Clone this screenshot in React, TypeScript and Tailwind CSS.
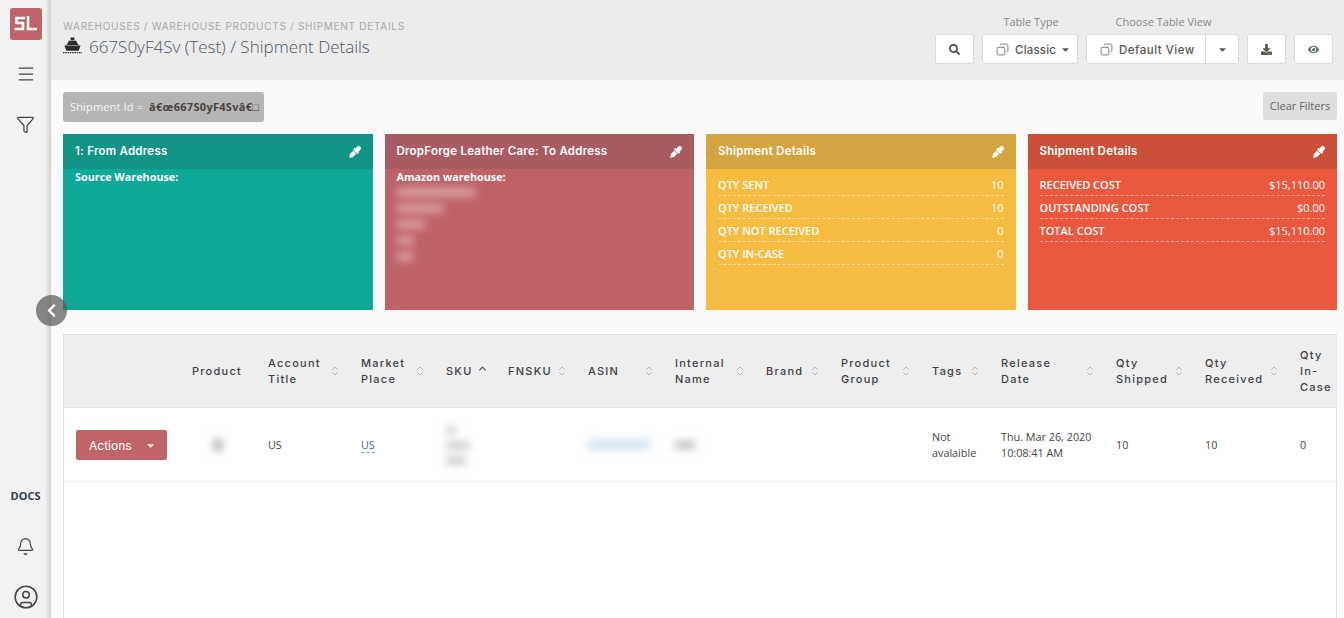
import React from "react";
import { Menu, Filter, Bell, CircleUser, Copy, ChevronsUpDown, ChevronUp } from "lucide-react";
import { FaEyeDropper, FaSearch, FaDownload, FaEye, FaChevronLeft, FaCaretDown } from "react-icons/fa";

const mont = "font-['Inter','Open_Sans',sans-serif]";
const open = "font-['Open_Sans','Noto_Sans',sans-serif]";

function Caret({ className = "" }: { className?: string }) {
  return <FaCaretDown className={`text-[11px] ${className}`} />;
}

function Ship() {
  return (
    <svg width="19" height="18" viewBox="0 0 20 18" className="mr-[7px] -mt-[2px]" fill="#2b2b2b">
      <rect x="8" y="0" width="4" height="3" />
      <path d="M6 3.5h8l1 2.5 1.5 2h-13L5 6z" />
      <path d="M1.5 8.5h17L16.5 14h-13z" />
      <path d="M0 16h20" stroke="#2b2b2b" strokeWidth="1.4" strokeDasharray="1.6 0.8" fill="none" />
    </svg>
  );
}

function Card({ title, head, body, children }: { title: string; head: string; body: string; children: React.ReactNode }) {
  return (
    <div className={`h-[176px] flex flex-col ${body}`}>
      <div className={`h-[35px] shrink-0 flex items-center justify-between pl-3 pr-3 ${head}`}>
        <span className={`${mont} text-[11.5px] tracking-[0.25px] font-semibold text-white`}>{title}</span>
        <FaEyeDropper className="text-white text-[12px]" />
      </div>
      {children}
    </div>
  );
}

function Rows({ rows }: { rows: [string, string][] }) {
  return (
    <div className="px-3 pt-[4px]">
      {rows.map(([k, v]) => (
        <div key={k} className={`h-[23px] pt-[2px] flex items-center justify-between border-b border-dashed border-white/50 ${open} text-[11px] text-white`}>
          <span className="font-semibold">{k}</span>
          <span>{v}</span>
        </div>
      ))}
    </div>
  );
}

const cols = [116, 76, 93, 85, 62, 80, 87, 91, 75, 91, 69, 115, 89, 95, 49];

function Th({ label, sort = "both" }: { label: React.ReactNode; sort?: "both" | "up" | "none" }) {
  return (
    <th className="pl-3 pr-[8px] font-medium text-left align-middle">
      <div className="flex items-center justify-between">
        <span className={`${mont} text-[11px] font-medium tracking-[1.25px] leading-4 text-[#3f3f46] whitespace-nowrap`}>{label}</span>
        {sort === "both" && <ChevronsUpDown size={12} strokeWidth={2} className="text-[#b4b4b4] shrink-0" />}
        {sort === "up" && <ChevronUp size={11} strokeWidth={3} className="text-[#555555] shrink-0 mb-1" />}
      </div>
    </th>
  );
}

function Blur({ className }: { className: string }) {
  return <div className={`blur-[4px] ${className}`} />;
}

export default function App() {
  return (
    <div className={`w-[1344px] h-[618px] overflow-hidden flex bg-[#fafafa] ${open} relative`}>
      <aside className="w-[51px] shrink-0 bg-gradient-to-r from-[#f2f2f2] from-88% to-[#d0d0d0] flex flex-col items-center">
        <div className="mt-2 w-8 h-8 rounded-[3px] bg-[#c0646a] flex items-center justify-center">
          <svg width="26" height="18" viewBox="0 0 26 18" fill="none" stroke="white" strokeWidth="2.6">
            <path d="M12 3H3.5v5H10v6H1.5" />
            <path d="M15 1v13h9" />
          </svg>
        </div>
        <Menu size={20} strokeWidth={1.5} className="mt-[24px] text-[#444444]" />
        <Filter size={19} strokeWidth={1.6} className="mt-[31px] text-[#444444]" />
        <div className="mt-auto flex flex-col items-center">
          <span className={`${open} text-[11px] font-bold text-[#333b4a]`}>DOCS</span>
          <Bell size={19} strokeWidth={1.5} className="mt-[33px] text-[#444444]" />
          <CircleUser size={26} strokeWidth={1.4} className="mt-[28px] mb-[8px] text-[#444444]" />
        </div>
      </aside>

      <button className="absolute left-[36px] top-[295px] w-[31px] h-[31px] rounded-full bg-[#555555]/70 flex items-center justify-center">
        <FaChevronLeft className="text-white text-[15px]" />
      </button>

      <main className="flex-1 min-w-0 flex flex-col">
        <header className="h-[80px] shrink-0 bg-[#ececec] flex justify-between pl-3 pr-[11px]">
          <div className="pt-[19px]">
            <div className={`${mont} text-[10px] tracking-[0.73px] leading-[14px] text-[#a8a8a8]`}>
              WAREHOUSES / WAREHOUSE PRODUCTS / SHIPMENT DETAILS
            </div>
            <div className="flex items-center mt-[2px]">
              <Ship />
              <span className={`${open} text-[17px] font-light text-[#4d5663] leading-[24px]`}>667S0yF4Sv (Test) / Shipment Details</span>
            </div>
          </div>
          <div className="flex items-end gap-2 pb-4">
            <button className="w-[39px] h-[30px] bg-white border border-[#d9d9d9] rounded-[3px] flex items-center justify-center">
              <FaSearch className="text-[11px] text-[#4a4a4a]" />
            </button>
            <div className="flex flex-col items-center">
              <span className="text-[11px] text-[#888888] leading-[14px] mb-[5px] ml-[2px]">Table Type</span>
              <button className="w-[96px] h-[30px] bg-white border border-[#d9d9d9] rounded-[3px] flex items-center pl-[13px] text-[#555555]">
                <Copy size={13} strokeWidth={1.5} className="-scale-x-100 text-[#666666]" />
                <span className={`${mont} text-[11.5px] tracking-[0.2px] font-medium ml-[6px] pt-[3px]`}>Classic</span>
                <Caret className="ml-[4px]" />
              </button>
            </div>
            <div className="flex flex-col items-center">
              <span className="text-[11px] text-[#888888] leading-[14px] mb-[5px] ml-[2px]">Choose Table View</span>
              <div className="flex h-[30px] w-[153px] bg-white border border-[#d9d9d9] rounded-[3px] text-[#555555]">
                <div className="w-[119px] flex items-center pl-[13px] border-r border-[#d9d9d9]">
                  <Copy size={13} strokeWidth={1.5} className="-scale-x-100 text-[#666666]" />
                  <span className={`${mont} text-[11.5px] tracking-[0.5px] font-medium ml-[6px] pt-[3px] whitespace-nowrap`}>Default View</span>
                </div>
                <div className="flex-1 flex items-center justify-center"><Caret /></div>
              </div>
            </div>
            <button className="w-[39px] h-[30px] bg-white border border-[#d9d9d9] rounded-[3px] flex items-center justify-center">
              <FaDownload className="text-[11px] text-[#5a5a4a]" />
            </button>
            <button className="w-[39px] h-[30px] bg-white border border-[#d9d9d9] rounded-[3px] flex items-center justify-center">
              <FaEye className="text-[11px] text-[#5a6a6a]" />
            </button>
          </div>
        </header>

        <div className="flex-1 min-h-0 pl-3 pr-[7px]">
          <div className="flex justify-between items-start pt-3 h-[54px]">
            <div className="h-[30px] w-[201px] bg-[#b5b5b5] rounded-[3px] flex items-center pl-[7px] pt-[1px] text-[11px]">
              <span className="text-[#f5f5f5] tracking-[0.15px]">Shipment Id =</span>
              <span className="ml-[6px] font-bold tracking-[0.3px] text-[#4a3f3f] whitespace-nowrap">â€œ667S0yF4Svâ€□</span>
            </div>
            <button className="h-[28px] w-[74px] pt-[1px] bg-[#dedede] rounded-[3px] text-[11px] text-[#666666]">Clear Filters</button>
          </div>

          <div className="grid grid-cols-4 gap-3">
            <Card title="1: From Address" head="bg-[#129485]" body="bg-[#0ea898]">
              <div className="px-3 text-[10.8px] font-bold text-white leading-4">Source Warehouse:</div>
            </Card>
            <Card title="DropForge Leather Care: To Address" head="bg-[#a95b62]" body="bg-[#be6268]">
              <div className="px-3 text-[10.8px] font-bold text-white leading-4">Amazon warehouse:</div>
              <div className="px-3 pt-[3px] flex flex-col gap-[7px]">
                <Blur className="h-[9px] w-[78px] bg-[#d9a3a7]" />
                <Blur className="h-[9px] w-[46px] bg-[#d9a3a7]" />
                <Blur className="h-[9px] w-[28px] bg-[#d9a3a7]" />
                <Blur className="h-[9px] w-[16px] bg-[#d9a3a7]" />
                <Blur className="h-[9px] w-[16px] bg-[#d9a3a7]" />
              </div>
            </Card>
            <Card title="Shipment Details" head="bg-[#d3a440]" body="bg-[#f6bc41]">
              <Rows rows={[["QTY SENT", "10"], ["QTY RECEIVED", "10"], ["QTY NOT RECEIVED", "0"], ["QTY IN-CASE", "0"]]} />
            </Card>
            <Card title="Shipment Details" head="bg-[#ca503a]" body="bg-[#ea583e]">
              <Rows rows={[["RECEIVED COST", "$15,110.00"], ["OUTSTANDING COST", "$0.00"], ["TOTAL COST", "$15,110.00"]]} />
            </Card>
          </div>

          <div className="mt-6 bg-white border border-[#e0e0e0] h-[300px]">
            <table className="table-fixed w-full border-collapse">
              <colgroup>
                {cols.map((w, i) => <col key={i} style={{ width: w }} />)}
              </colgroup>
              <thead>
                <tr className="h-[72px] bg-[#eeeeee] border-b border-[#e4e4e4]">
                  <th />
                  <Th label="Product" sort="none" />
                  <Th label={<>Account<br />Title</>} />
                  <Th label={<>Market<br />Place</>} />
                  <Th label="SKU" sort="up" />
                  <Th label="FNSKU" />
                  <Th label="ASIN" />
                  <Th label={<>Internal<br />Name</>} />
                  <Th label="Brand" />
                  <Th label={<>Product<br />Group</>} />
                  <Th label="Tags" />
                  <Th label={<>Release<br />Date</>} />
                  <Th label={<>Qty<br />Shipped</>} />
                  <Th label={<>Qty<br />Received</>} />
                  <Th label={<>Qty<br />In-<br />Case</>} sort="none" />
                </tr>
              </thead>
              <tbody className="text-[10.8px] text-[#444444] leading-4">
                <tr className="h-[74px] border-b border-[#ececec]">
                  <td className="pl-3 pt-[2px]">
                    <button className="w-[91px] h-[30px] bg-[#c0646a] rounded-[2px] flex items-center justify-between pl-[13px] pr-[11px] text-white">
                      <span className={`${mont} text-[12px] pt-[2px]`}>Actions</span>
                      <Caret />
                    </button>
                  </td>
                  <td className="pl-[34px] pt-[2px]"><Blur className="w-[8px] h-[12px] bg-[#a8a8a8]" /></td>
                  <td className="pl-3 pt-[2px]">US</td>
                  <td className="pl-3 pt-[2px]"><span className="text-[#456a8a] border-b border-dashed border-[#7a9ab5]">US</span></td>
                  <td className="pl-3 pt-[2px]">
                    <div className="flex flex-col gap-[8px]">
                      <Blur className="w-[10px] h-[7px] bg-[#c4c4c4]" />
                      <Blur className="w-[24px] h-[7px] bg-[#c4c4c4]" />
                      <Blur className="w-[20px] h-[7px] bg-[#c4c4c4]" />
                    </div>
                  </td>
                  <td />
                  <td className="pl-3 pt-[2px]"><Blur className="w-[62px] h-[10px] bg-[#d3e1ee]" /></td>
                  <td className="pl-3 pt-[2px]"><Blur className="w-[20px] h-[8px] bg-[#bcbcbc]" /></td>
                  <td />
                  <td />
                  <td className="pl-3 pt-[2px]">Not<br />avalaible</td>
                  <td className="pl-3 pt-[2px] whitespace-nowrap">Thu. Mar 26, 2020<br />10:08:41 AM</td>
                  <td className="pl-3 pt-[2px]">10</td>
                  <td className="pl-3 pt-[2px]">10</td>
                  <td className="pl-3 pt-[2px]">0</td>
                </tr>
              </tbody>
            </table>
          </div>
        </div>
      </main>
    </div>
  );
}
